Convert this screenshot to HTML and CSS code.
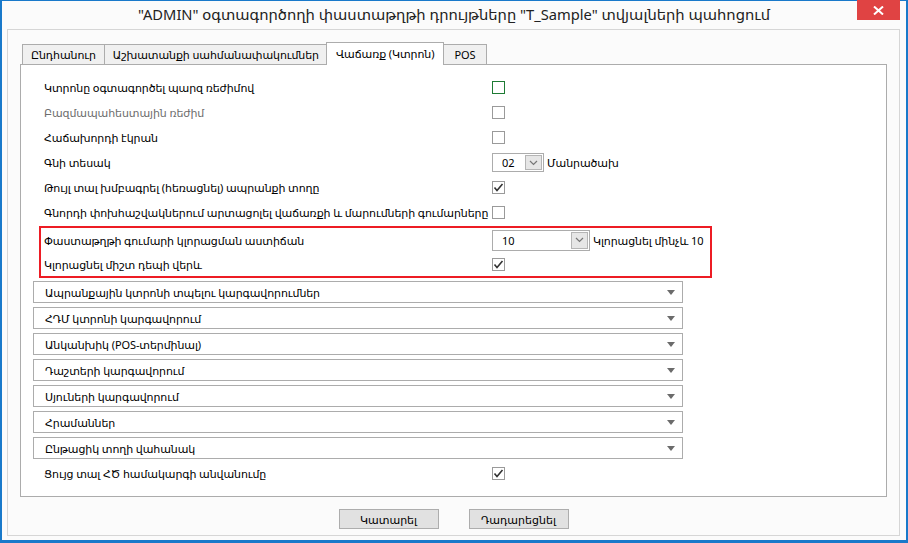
FILE: index.html
```html
<!DOCTYPE html>
<html lang="hy">
<head>
    <meta charset="UTF-8">
    <title>Փաստաթղթի դրույթներ</title>
    <link rel="stylesheet" href="styles.css">
</head>
<body>
    <div class="window">
        <!-- Title bar -->
        <div class="titlebar">
            <span></span>
            <div class="title">"ADMIN" օգտագործողի փաստաթղթի դրույթները "T_Sample" տվյալների պահոցում</div>
            <button class="close-btn">
                <svg width="11" height="9" viewBox="0 0 11 9"><path d="M1 0.5 L10 8.5 M10 0.5 L1 8.5" stroke="#fff" stroke-width="2"/></svg>
            </button>
        </div>

        <div class="frame">
            <div class="tabs">
                <div class="tab">Ընդհանուր</div>
                <div class="tab">Աշխատանքի սահմանափակումներ</div>
                <div class="tab active">Վաճառք (Կտրոն)</div>
                <div class="tab pos">POS</div>
            </div>

            <div class="tab-page">
                <div class="row">
                    <span class="label">Կտրոնը օգտագործել պարզ ռեժիմով</span>
                    <span class="check focused"></span>
                </div>
                <div class="row">
                    <span class="label disabled">Բազմապահեստային ռեժիմ</span>
                    <span class="check"></span>
                </div>
                <div class="row">
                    <span class="label">Հաճախորդի էկրան</span>
                    <span class="check"></span>
                </div>
                <div class="row">
                    <span class="label">Գնի տեսակ</span>
                    <span class="select small">
                        <span class="select-value">02</span>
                        <span class="select-btn"><svg width="9" height="6" viewBox="0 0 9 6"><path d="M1 1 L4.5 4.5 L8 1" fill="none" stroke="#777" stroke-width="1.2"/></svg></span>
                    </span>
                    <span class="after">Մանրածախ</span>
                </div>
                <div class="row">
                    <span class="label">Թույլ տալ խմբագրել (հեռացնել) ապրանքի տողը</span>
                    <span class="check checked"><svg width="11" height="11" viewBox="0 0 11 11"><path d="M1.5 5.5 L4 8.5 L9.5 2" fill="none" stroke="#333" stroke-width="1.6"/></svg></span>
                </div>
                <div class="row">
                    <span class="label">Գնորդի փոխհաշվակներում արտացոլել վաճառքի և մարումների գումարները</span>
                    <span class="check"></span>
                </div>

                <div class="highlight">
                    <div class="row">
                        <span class="label">Փաստաթղթի գումարի կլորացման աստիճան</span>
                        <span class="select wide">
                            <span class="select-value">10</span>
                            <span class="select-btn"><svg width="9" height="6" viewBox="0 0 9 6"><path d="M1 1 L4.5 4.5 L8 1" fill="none" stroke="#777" stroke-width="1.2"/></svg></span>
                        </span>
                        <span class="after">Կլորացնել մինչև 10</span>
                    </div>
                    <div class="row">
                        <span class="label">Կլորացնել միշտ դեպի վերև</span>
                        <span class="check checked"><svg width="11" height="11" viewBox="0 0 11 11"><path d="M1.5 5.5 L4 8.5 L9.5 2" fill="none" stroke="#333" stroke-width="1.6"/></svg></span>
                    </div>
                </div>

                <div class="groups">
                    <div class="group">Ապրանքային կտրոնի տպելու կարգավորումներ<span class="arrow"></span></div>
                    <div class="group">ՀԴՄ կտրոնի կարգավորում<span class="arrow"></span></div>
                    <div class="group">Անկանխիկ (POS-տերմինալ)<span class="arrow"></span></div>
                    <div class="group">Դաշտերի կարգավորում<span class="arrow"></span></div>
                    <div class="group">Սյուների կարգավորում<span class="arrow"></span></div>
                    <div class="group">Հրամաններ<span class="arrow"></span></div>
                    <div class="group">Ընթացիկ տողի վահանակ<span class="arrow"></span></div>
                </div>

                <div class="row last">
                    <span class="label">Ցույց տալ ՀԾ համակարգի անվանումը</span>
                    <span class="check checked"><svg width="11" height="11" viewBox="0 0 11 11"><path d="M1.5 5.5 L4 8.5 L9.5 2" fill="none" stroke="#333" stroke-width="1.6"/></svg></span>
                </div>
            </div>

            <div class="actions">
                <button class="btn">Կատարել</button>
                <button class="btn">Դադարեցնել</button>
            </div>
        </div>
    </div>
</body>
</html>
```

FILE: styles.css
```css
body {
    margin: 0;
    font-family: "Noto Sans", "DejaVu Sans", sans-serif;
    font-size: 11px;
    letter-spacing: -0.1px;
    color: #000;
}

.window {
    width: 908px;
    height: 543px;
    box-sizing: border-box;
    background: #fbfbfb;
    border: 2px solid #1979ca;
    border-top-width: 1px;
    border-bottom-width: 3px;
}

/* Title bar */
.titlebar {
    height: 28px;
    display: grid;
    grid-template-columns: 1fr auto 1fr;
    align-items: start;
}

.title {
    font-size: 14.7px;
    letter-spacing: 0;
    line-height: 27px;
    color: #222;
    white-space: nowrap;
}

.close-btn {
    justify-self: end;
    margin: -1px 6px 0 0;
    width: 43px;
    height: 20px;
    border: none;
    padding: 0;
    background: #e04343;
    display: flex;
    align-items: center;
    justify-content: center;
}

/* Frame */
.frame {
    margin: 0 6px 0 5px;
    height: 507px;
    box-sizing: border-box;
    border: 1px solid #d6d6d6;
}

.tabs {
    display: flex;
    align-items: flex-end;
    padding: 12px 0 0 15px;
}

.tab {
    height: 20px;
    box-sizing: border-box;
    padding: 0 8px;
    margin-left: -1px;
    line-height: 19px;
    border: 1px solid #acacac;
    border-bottom: none;
    background: #f0f0f0;
    white-space: nowrap;
}

.tab.pos {
    padding: 0 11px 0 12px;
}

.tab.active {
    height: 23px;
    line-height: 22px;
    margin: 0 -2px -1px -2px;
    padding: 0 9px;
    background: #fff;
    position: relative;
    z-index: 1;
}

.tab-page {
    margin: 0 12px;
    height: 433px;
    box-sizing: border-box;
    border: 1px solid #acacac;
    background: #fff;
    padding-top: 10px;
}

.row {
    display: flex;
    align-items: center;
    height: 25px;
    padding-left: 23px;
    white-space: nowrap;
}

.label {
    width: 448px;
    flex: none;
}

.label.disabled {
    color: #6d6d6d;
}

.check {
    width: 13px;
    height: 13px;
    box-sizing: border-box;
    border: 1px solid #9a9a9a;
    display: flex;
    align-items: center;
    justify-content: center;
}

.check.focused {
    border-color: #1e7b34;
}

.select {
    display: flex;
    align-items: center;
    box-sizing: border-box;
    border: 1px solid #acacac;
    padding: 0 1px 0 9px;
    background: #fff;
}

.select.small {
    width: 52px;
    height: 19px;
}

.select.wide {
    width: 98px;
    height: 21px;
}

.select-value {
    flex: 1;
}

.select-btn {
    width: 17px;
    box-sizing: border-box;
    border: 1px solid #b5b5b5;
    background: #e6e6e6;
    display: flex;
    align-items: center;
    justify-content: center;
}

.select.small .select-btn {
    height: 15px;
}

.select.wide .select-btn {
    height: 17px;
}

.after {
    margin-left: 3px;
}

.highlight {
    margin: 1px 0 0 18px;
    width: 673px;
    box-sizing: border-box;
    border: 2px solid #ed1c24;
}

.highlight .row {
    height: 24px;
    padding-left: 3px;
}

/* Collapsed groups */
.groups {
    display: flex;
    flex-direction: column;
    gap: 4px;
    margin: 3px 0 0 12px;
}

.group {
    width: 650px;
    height: 22px;
    box-sizing: border-box;
    border: 1px solid #acacac;
    padding: 0 7px 0 11px;
    display: flex;
    align-items: center;
    justify-content: space-between;
    white-space: nowrap;
}

.arrow {
    width: 0;
    height: 0;
    border-left: 4px solid transparent;
    border-right: 4px solid transparent;
    border-top: 5px solid #6b6b6b;
}

.row.last {
    margin-top: 2px;
    height: 24px;
}

/* Buttons */
.actions {
    display: flex;
    justify-content: center;
    gap: 30px;
    margin-top: 12px;
}

.btn {
    width: 100px;
    height: 20px;
    padding: 0;
    border: 1px solid #adadad;
    background: #e1e1e1;
    font-family: inherit;
    font-size: 11px;
    color: #000;
}
```
